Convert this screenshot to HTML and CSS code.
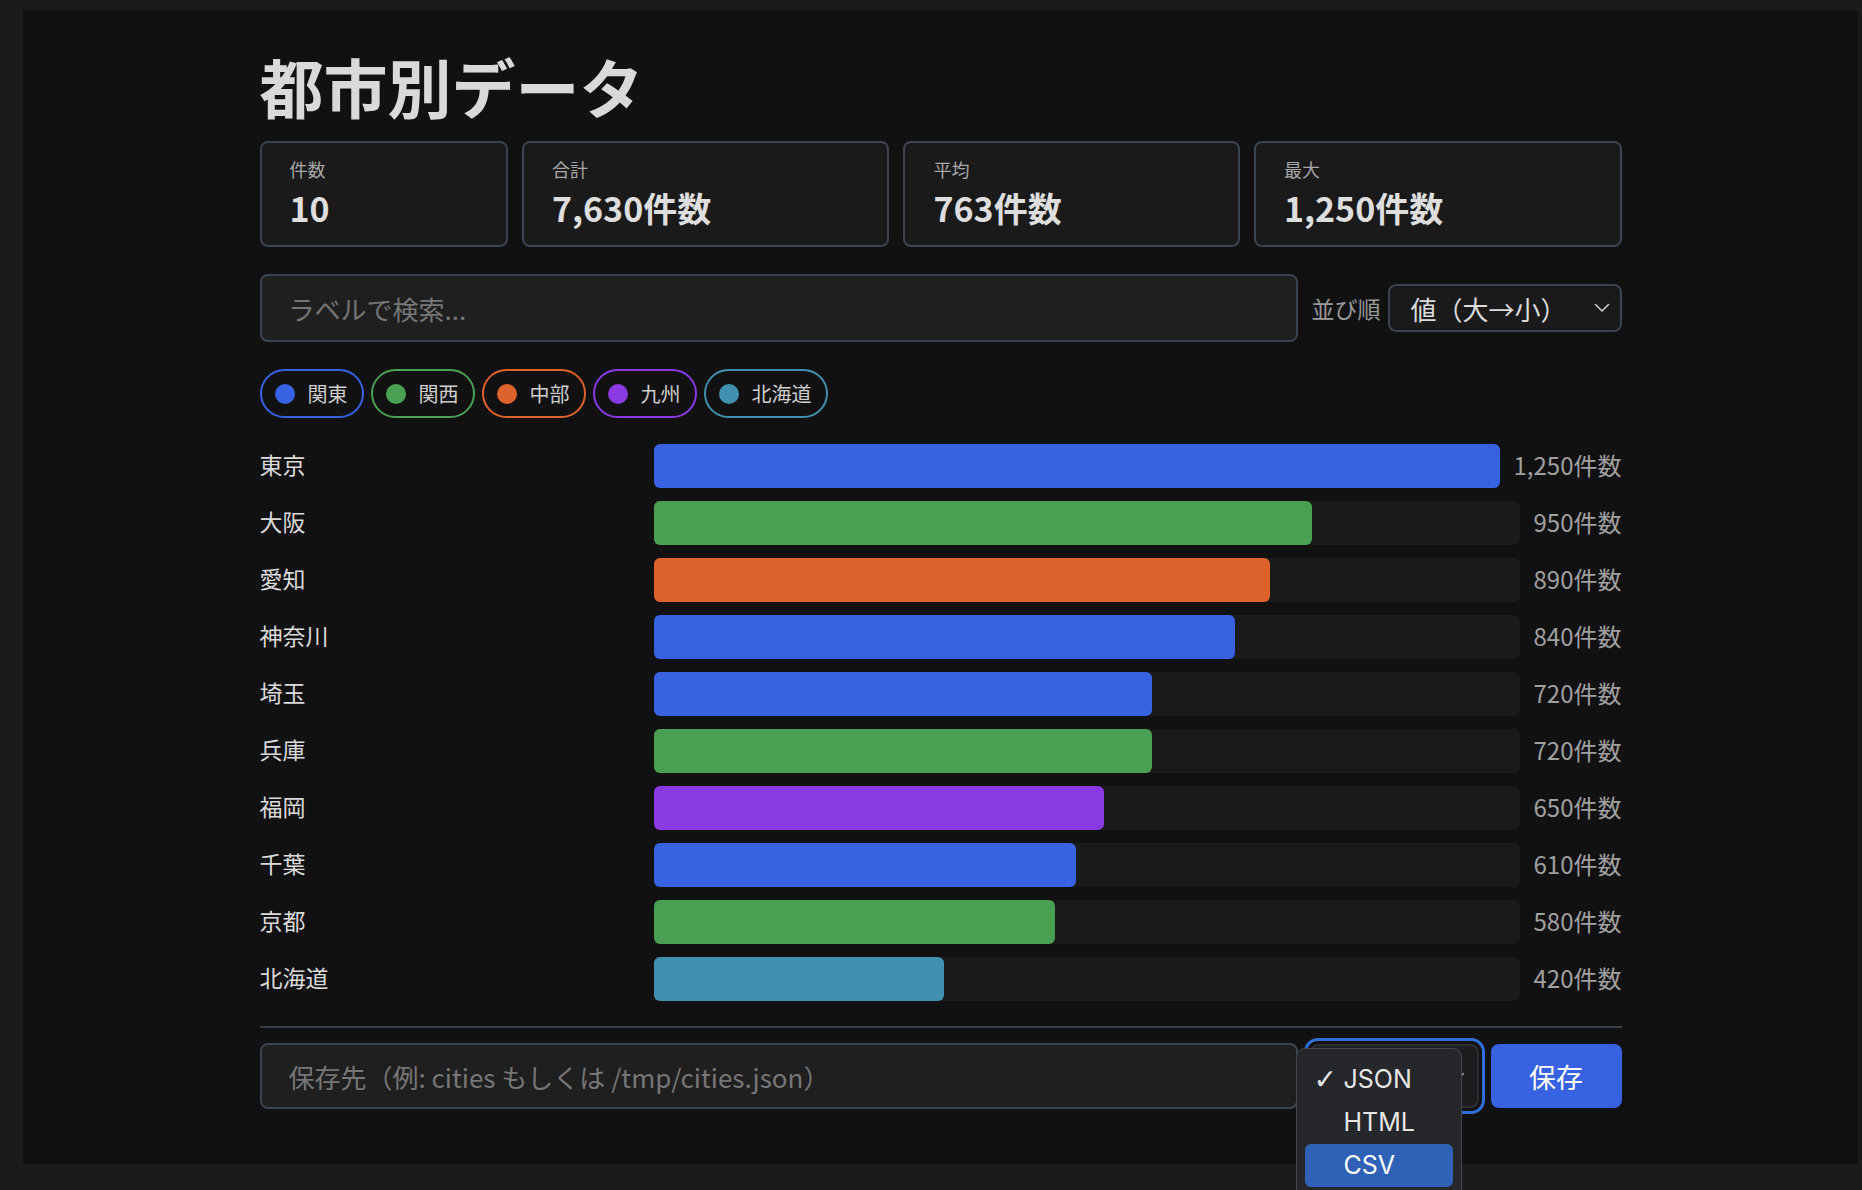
FILE: index.html
```html
<!DOCTYPE html>
<html lang="ja">
<head>
    <meta charset="UTF-8">
    <meta name="viewport" content="width=device-width, initial-scale=1.0">
    <title>都市別データ</title>
    <link rel="stylesheet" href="styles.css">
</head>
<body>
    <div class="panel">
        <div class="content">
            <h1 class="title">都市別データ</h1>

            <div class="stats">
                <div class="stat-card">
                    <div class="stat-label">件数</div>
                    <div class="stat-value">10</div>
                </div>
                <div class="stat-card">
                    <div class="stat-label">合計</div>
                    <div class="stat-value">7,630件数</div>
                </div>
                <div class="stat-card">
                    <div class="stat-label">平均</div>
                    <div class="stat-value">763件数</div>
                </div>
                <div class="stat-card">
                    <div class="stat-label">最大</div>
                    <div class="stat-value">1,250件数</div>
                </div>
            </div>

            <div class="toolbar">
                <input class="text-input search-input" type="text" placeholder="ラベルで検索...">
                <span class="sort-label">並び順</span>
                <div class="select sort-select">
                    <span>値（大→小）</span>
                    <svg class="chevron" width="16" height="10" viewBox="0 0 16 10"><path d="M1.5 1.5 L8 8 L14.5 1.5" fill="none" stroke="#c8c8c8" stroke-width="1.6" stroke-linecap="round" stroke-linejoin="round"/></svg>
                </div>
            </div>

            <div class="chips">
                <span class="chip chip-kanto"><i class="dot"></i>関東</span>
                <span class="chip chip-kansai"><i class="dot"></i>関西</span>
                <span class="chip chip-chubu"><i class="dot"></i>中部</span>
                <span class="chip chip-kyushu"><i class="dot"></i>九州</span>
                <span class="chip chip-hokkaido"><i class="dot"></i>北海道</span>
            </div>

            <div class="bars">
                <div class="bar-row">
                    <span class="bar-label">東京</span>
                    <div class="track"><div class="fill kanto" style="width: 100%"></div></div>
                    <span class="bar-value">1,250件数</span>
                </div>
                <div class="bar-row">
                    <span class="bar-label">大阪</span>
                    <div class="track"><div class="fill kansai" style="width: 76%"></div></div>
                    <span class="bar-value">950件数</span>
                </div>
                <div class="bar-row">
                    <span class="bar-label">愛知</span>
                    <div class="track"><div class="fill chubu" style="width: 71.2%"></div></div>
                    <span class="bar-value">890件数</span>
                </div>
                <div class="bar-row">
                    <span class="bar-label">神奈川</span>
                    <div class="track"><div class="fill kanto" style="width: 67.2%"></div></div>
                    <span class="bar-value">840件数</span>
                </div>
                <div class="bar-row">
                    <span class="bar-label">埼玉</span>
                    <div class="track"><div class="fill kanto" style="width: 57.6%"></div></div>
                    <span class="bar-value">720件数</span>
                </div>
                <div class="bar-row">
                    <span class="bar-label">兵庫</span>
                    <div class="track"><div class="fill kansai" style="width: 57.6%"></div></div>
                    <span class="bar-value">720件数</span>
                </div>
                <div class="bar-row">
                    <span class="bar-label">福岡</span>
                    <div class="track"><div class="fill kyushu" style="width: 52%"></div></div>
                    <span class="bar-value">650件数</span>
                </div>
                <div class="bar-row">
                    <span class="bar-label">千葉</span>
                    <div class="track"><div class="fill kanto" style="width: 48.8%"></div></div>
                    <span class="bar-value">610件数</span>
                </div>
                <div class="bar-row">
                    <span class="bar-label">京都</span>
                    <div class="track"><div class="fill kansai" style="width: 46.4%"></div></div>
                    <span class="bar-value">580件数</span>
                </div>
                <div class="bar-row">
                    <span class="bar-label">北海道</span>
                    <div class="track"><div class="fill hokkaido" style="width: 33.6%"></div></div>
                    <span class="bar-value">420件数</span>
                </div>
            </div>

            <hr class="divider">

            <div class="save-row">
                <input class="text-input save-input" type="text" placeholder="保存先（例: cities もしくは /tmp/cities.json）">
                <div class="format-wrap">
                    <div class="select format-select">
                        <svg class="chevron" width="14" height="9" viewBox="0 0 14 9"><path d="M1.5 1.5 L7 7 L12.5 1.5" fill="none" stroke="#9a9a9a" stroke-width="1.6" stroke-linecap="round" stroke-linejoin="round"/></svg>
                    </div>
                    <!-- открытое меню выбора формата -->
                    <ul class="format-menu">
                        <li class="menu-item"><span class="check">✓</span>JSON</li>
                        <li class="menu-item">HTML</li>
                        <li class="menu-item active">CSV</li>
                    </ul>
                </div>
                <button class="save-button">保存</button>
            </div>
        </div>
    </div>
</body>
</html>
```

FILE: styles.css
```css
html {
    overflow: hidden;
}
body {
    margin: 0;
    padding: 10px 4px 26px 23px;
    background-color: #1b1b1b;
    font-family: "Noto Sans CJK JP", "Noto Sans", sans-serif;
    color: #dcdcdc;
}
.panel {
    height: 1154px;
    box-sizing: border-box;
    padding-top: 37px;
    background-color: #111111;
}
.content {
    max-width: 1362px;
    margin: 0 auto;
}
.title {
    margin: 0;
    font-size: 64px;
    line-height: 76px;
    font-weight: 700;
    color: #d9d9d9;
}

/* карточки статистики */
.stats {
    display: flex;
    gap: 14px;
    margin-top: 18px;
}
.stat-card {
    flex: 1 1 auto;
    padding: 13px 28px 17px;
    border: 2px solid #3a4454;
    border-radius: 8px;
    background-color: #1a1a1b;
}
.stat-label {
    font-size: 18px;
    line-height: 27px;
    color: #a8a8a8;
}
.stat-value {
    margin-top: 5px;
    font-size: 34px;
    line-height: 40px;
    font-weight: 700;
    color: #dedede;
    white-space: nowrap;
}

.toolbar {
    display: flex;
    align-items: center;
    margin-top: 27px;
}
.text-input {
    box-sizing: border-box;
    border: 2px solid #3a4454;
    border-radius: 8px;
    background-color: #1f1f1f;
    color: #dcdcdc;
    font-family: "Noto Sans CJK JP", "Noto Sans", sans-serif;
    font-size: 26px;
    padding: 0 27px;
    outline: none;
}
.text-input::placeholder {
    color: #767676;
}
.search-input {
    width: 1038px;
    height: 68px;
}
.sort-label {
    margin-left: 14px;
    margin-right: 7px;
    font-size: 23px;
    color: #9a9a9a;
}
.select {
    box-sizing: border-box;
    display: flex;
    align-items: center;
    justify-content: space-between;
    border: 2px solid #3a4454;
    border-radius: 8px;
    background-color: #1a1a1b;
}
.sort-select {
    flex: 1;
    height: 48px;
    padding: 0 10px 0 21px;
    font-size: 26px;
    color: #dcdcdc;
}

/* чипы регионов */
.chips {
    display: flex;
    gap: 7px;
    margin-top: 27px;
}
.chip {
    display: flex;
    align-items: center;
    gap: 13px;
    height: 49px;
    box-sizing: border-box;
    padding: 0 14px 0 13px;
    border: 2px solid;
    border-radius: 25px;
    font-size: 20px;
    color: #cfcfcf;
}
.dot {
    width: 20px;
    height: 20px;
    border-radius: 50%;
}
.chip-kanto { border-color: #3763e2; }
.chip-kanto .dot { background-color: #3763e2; }
.chip-kansai { border-color: #4aa052; }
.chip-kansai .dot { background-color: #4aa052; }
.chip-chubu { border-color: #de622c; }
.chip-chubu .dot { background-color: #de622c; }
.chip-kyushu { border-color: #8a3ae2; }
.chip-kyushu .dot { background-color: #8a3ae2; }
.chip-hokkaido { border-color: #4290b0; }
.chip-hokkaido .dot { background-color: #4290b0; }

/* строки с полосами */
.bars {
    display: flex;
    flex-direction: column;
    gap: 13px;
    margin-top: 26px;
}
.bar-row {
    display: flex;
    align-items: center;
    gap: 14px;
    height: 44px;
}
.bar-label {
    width: 380px;
    padding-bottom: 4px;
    font-size: 23px;
    color: #dadada;
}
.track {
    flex: 1;
    height: 44px;
    border-radius: 6px;
    background-color: #1a1a1a;
}
.fill {
    height: 100%;
    border-radius: 6px;
}
.fill.kanto { background-color: #3763e2; }
.fill.kansai { background-color: #4aa052; }
.fill.chubu { background-color: #de622c; }
.fill.kyushu { background-color: #8a3ae2; }
.fill.hokkaido { background-color: #4290b0; }
.bar-value {
    padding-bottom: 3px;
    font-size: 24px;
    color: #a0a0a0;
    white-space: nowrap;
}

.divider {
    margin: 25px 0 0;
    border: none;
    border-top: 2px solid #363e4a;
}

.save-row {
    display: flex;
    align-items: center;
    gap: 12px;
    margin-top: 15px;
}
.save-input {
    flex: 1;
    height: 66px;
}
.format-wrap {
    position: relative;
}
.format-select {
    width: 169px;
    height: 64px;
    padding: 0 12px 0 20px;
    justify-content: flex-end;
    background-color: #1c1d1f;
    border-color: #2c2f34;
    outline: 3px solid #2f6fd8;
    outline-offset: 3px;
}
.format-menu {
    position: absolute;
    top: 4px;
    left: -14px;
    z-index: 10;
    width: 166px;
    height: 160px;
    box-sizing: border-box;
    margin: 0;
    padding: 9px 8px;
    list-style: none;
    background-color: #25272b;
    border: 1px solid #45484e;
    border-radius: 9px;
    font-family: "Inter", "Liberation Sans", sans-serif;
    font-size: 25px;
    color: #e6e6e6;
}
.menu-item {
    position: relative;
    height: 43px;
    line-height: 43px;
    padding-left: 39px;
    border-radius: 6px;
}
.menu-item.active {
    background-color: #2f62b6;
    color: #ffffff;
}
.check {
    position: absolute;
    left: 9px;
    font-family: "DejaVu Sans", sans-serif;
    font-size: 28px;
    font-weight: 700;
}
.save-button {
    width: 131px;
    height: 64px;
    border: none;
    border-radius: 8px;
    background-color: #3763e2;
    color: #ffffff;
    font-family: "Noto Sans CJK JP", "Noto Sans", sans-serif;
    font-size: 27px;
    cursor: pointer;
}
```
